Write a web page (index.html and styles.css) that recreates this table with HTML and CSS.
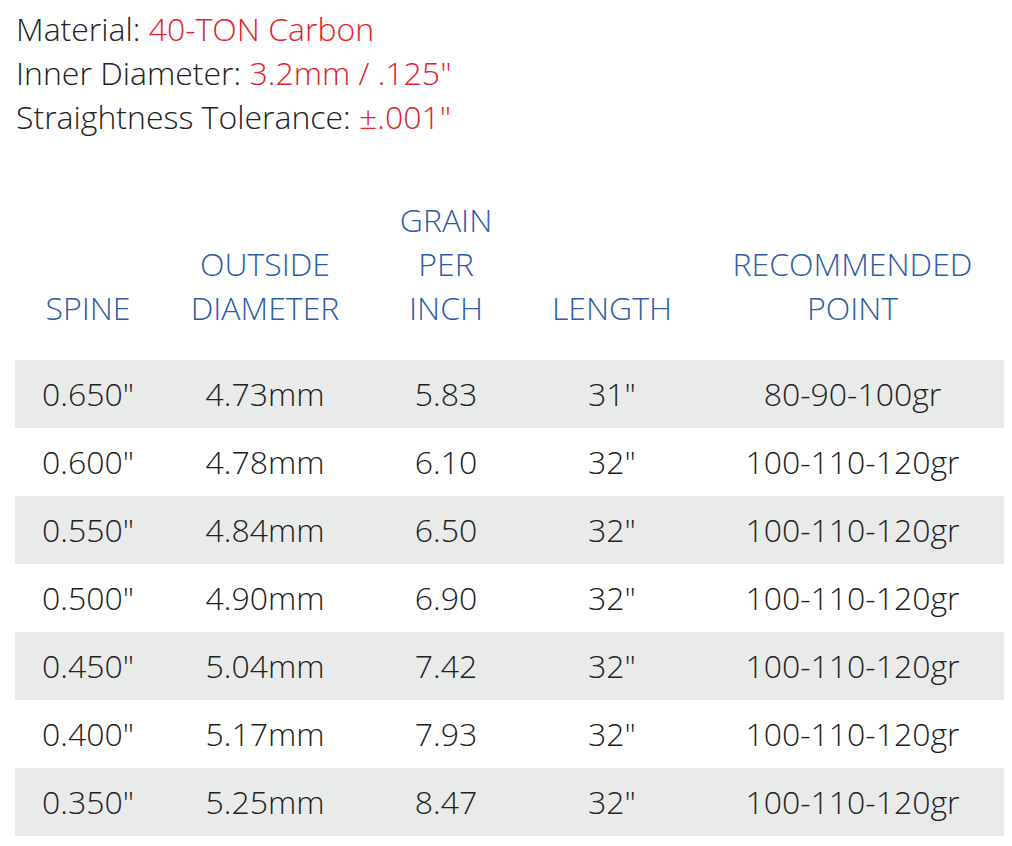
FILE: index.html
```html
<!DOCTYPE html>
<html>
<head>
<meta charset="utf-8">
<link rel="stylesheet" href="styles.css">
</head>
<body>
<div class="specs">
  <div class="spec">Material: <span class="val">40-TON Carbon</span></div>
  <div class="spec">Inner Diameter: <span class="val">3.2mm / .125"</span></div>
  <div class="spec">Straightness Tolerance: <span class="val">±.001"</span></div>
</div>
<table class="chart">
  <colgroup>
    <col class="c1"><col class="c2"><col class="c3"><col class="c4"><col class="c5">
  </colgroup>
  <thead>
    <tr>
      <th>SPINE</th>
      <th>OUTSIDE<br>DIAMETER</th>
      <th>GRAIN<br>PER<br>INCH</th>
      <th>LENGTH</th>
      <th>RECOMMENDED<br>POINT</th>
    </tr>
  </thead>
  <tbody>
    <tr><td>0.650"</td><td>4.73mm</td><td>5.83</td><td>31"</td><td>80-90-100gr</td></tr>
    <tr><td>0.600"</td><td>4.78mm</td><td>6.10</td><td>32"</td><td>100-110-120gr</td></tr>
    <tr><td>0.550"</td><td>4.84mm</td><td>6.50</td><td>32"</td><td>100-110-120gr</td></tr>
    <tr><td>0.500"</td><td>4.90mm</td><td>6.90</td><td>32"</td><td>100-110-120gr</td></tr>
    <tr><td>0.450"</td><td>5.04mm</td><td>7.42</td><td>32"</td><td>100-110-120gr</td></tr>
    <tr><td>0.400"</td><td>5.17mm</td><td>7.93</td><td>32"</td><td>100-110-120gr</td></tr>
    <tr><td>0.350"</td><td>5.25mm</td><td>8.47</td><td>32"</td><td>100-110-120gr</td></tr>
  </tbody>
</table>
</body>
</html>
```
FILE: styles.css
```css
html, body {
  margin: 0;
  padding: 0;
  background: #ffffff;
}
body {
  font-family: "Open Sans", "Liberation Sans", sans-serif;
  font-weight: 300;
  font-size: 32px;
  color: #222222;
}
.specs {
  padding: 7px 0 0 16px;
}
.spec {
  line-height: 44px;
  height: 44px;
  white-space: nowrap;
}
.val {
  color: #e3212a;
}
.chart {
  margin: 59px 0 0 15px;
  width: 989px;
  border-collapse: collapse;
  table-layout: fixed;
}
.c1 { width: 146px; }
.c2 { width: 208px; }
.c3 { width: 154px; }
.c4 { width: 178px; }
.c5 { width: 303px; }
.chart th {
  font-weight: 300;
  color: #2d5ca8;
  line-height: 44px;
  vertical-align: bottom;
  text-align: center;
  padding: 0 0 30px 0;
  white-space: nowrap;
}
.chart td {
  height: 68px;
  padding: 0;
  text-align: center;
  vertical-align: middle;
  line-height: 68px;
  white-space: nowrap;
}
.chart tbody tr:nth-child(odd) td {
  background: #e9eaea;
}
```
